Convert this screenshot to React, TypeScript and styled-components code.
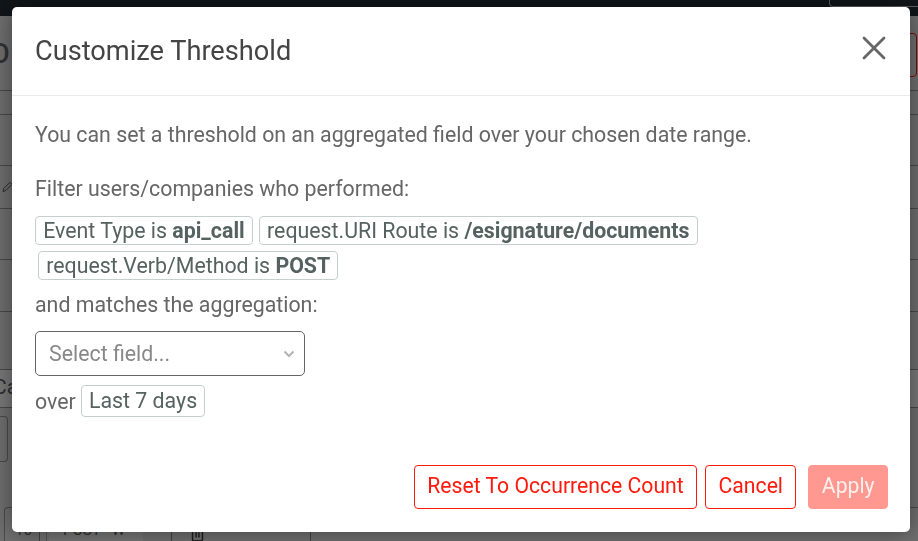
import styled, { createGlobalStyle } from "styled-components";
import { Trash2 } from "lucide-react";

const GlobalStyle = createGlobalStyle`
   html, body {
      margin: 0;
      height: 100%;
      overflow: hidden;
      background-color: #707070;
      font-family: Roboto, "Liberation Sans", sans-serif;
   }
`;

export default function App() {
   return (
      <>
         <GlobalStyle />
         <Page>
            <TopBar>
               <TopBarButton />
            </TopBar>
            <TitleRow>
               <PageTitle>O</PageTitle>
               <DangerOutline />
            </TitleRow>
            <PageRow $height={24} />
            <PageRow $height={51} />
            <PageRow $height={43}>
               <svg width="14" height="14" viewBox="0 0 14 14" fill="none" stroke="#2a2a2a" strokeWidth="1">
                  <path d="M3 11.5l.8-3L10 2.3l2 2L5.8 10.5z" />
               </svg>
            </PageRow>
            <PageRow $height={51} />
            <PageRow $height={52} />
            <PageRow $height={58} />
            <BandRow>Ca</BandRow>
            <CardRow>
               <GhostCard />
            </CardRow>
            <TableRow>
               <CountCell>16</CountCell>
               <VerbCell>
                  <VerbChip>POST · W</VerbChip>
               </VerbCell>
               <TrashCell>
                  <Trash2 size={17} strokeWidth={2} color="#1c1c1c" />
               </TrashCell>
            </TableRow>
         </Page>
         <Modal>
            <ModalHeader>
               <ModalTitle>Customize Threshold</ModalTitle>
               <CloseButton aria-label="Close">
                  <svg width="24" height="24" viewBox="0 0 24 24" fill="none" stroke="#666" strokeWidth="2.8" strokeLinecap="round">
                     <path d="M2 2l20 20M22 2L2 22" />
                  </svg>
               </CloseButton>
            </ModalHeader>
            <ModalBody>
               <Intro>You can set a threshold on an aggregated field over your chosen date range.</Intro>
               <Label>Filter users/companies who performed:</Label>
               <Chips>
                  <Chip>
                     Event Type is <b>api_call</b>
                  </Chip>
                  <Chip>
                     request.URI Route is <b>/esignature/documents</b>
                  </Chip>
                  <Chip>
                     request.Verb/Method is <b>POST</b>
                  </Chip>
               </Chips>
               <AggregationLabel>and matches the aggregation:</AggregationLabel>
               <SelectBox>
                  <Placeholder>Select field...</Placeholder>
                  <svg width="12" height="8" viewBox="0 0 12 8" fill="none" stroke="#b3b3b3" strokeWidth="2">
                     <path d="M1.5 1.5L6 6l4.5-4.5" />
                  </svg>
               </SelectBox>
               <OverRow>
                  over <DateChip>Last 7 days</DateChip>
               </OverRow>
            </ModalBody>
            <ModalFooter>
               <OutlineButton>Reset To Occurrence Count</OutlineButton>
               <OutlineButton>Cancel</OutlineButton>
               <ApplyButton>Apply</ApplyButton>
            </ModalFooter>
         </Modal>
      </>
   );
}

const Page = styled.div`
   height: 541px;
   overflow: hidden;
   background-color: #707070;
   color: #2e2e2e;
`;

const TopBar = styled.div`
   height: 16px;
   background-color: #11161a;
   display: flex;
   justify-content: flex-end;
`;

const TopBarButton = styled.div`
   width: 88px;
   height: 6px;
   border: 1px solid #5c6165;
   border-top: none;
   border-right: none;
   border-radius: 0 0 0 4px;
`;

const TitleRow = styled.div`
   height: 75px;
   box-sizing: border-box;
   border-bottom: 1px solid #4a4a4a;
   display: flex;
   justify-content: space-between;
   align-items: center;
   overflow: hidden;
`;

const PageTitle = styled.div`
   font-size: 27px;
   font-weight: 500;
   color: #333;
   margin-top: 2px;
   transform: translateX(-9px);
`;

const DangerOutline = styled.div`
   width: 60px;
   height: 44px;
   box-sizing: border-box;
   border: 1px solid #7e0c06;
   border-radius: 4px;
   margin-right: 1px;
   margin-top: 4px;
`;

const PageRow = styled.div<{ $height: number }>`
   height: ${({ $height }) => $height}px;
   box-sizing: border-box;
   border-bottom: 1px solid #4a4a4a;
   display: flex;
   align-items: center;
`;

const BandRow = styled.div`
   height: 38px;
   box-sizing: border-box;
   background-color: #7a7a7a;
   border-bottom: 1px solid #4a4a4a;
   font-size: 21px;
   color: #2e2e2e;
   line-height: 32px;
   padding-top: 1px;
   text-indent: -7px;
`;

const CardRow = styled.div`
   height: 99px;
   padding-top: 8px;
   box-sizing: border-box;
`;

const GhostCard = styled.div`
   width: 7px;
   height: 44px;
   border: 1px solid #4c4c4c;
   border-left: none;
   border-radius: 0 4px 4px 0;
`;

const TableRow = styled.div`
   display: flex;
   height: 34px;
   margin-left: 4px;
   border: 1px solid #4c4c4c;
   border-radius: 4px 0 0 0;
   border-width: 1px 0 0 1px;
   font-size: 15px;
   color: #2e2e2e;
   white-space: nowrap;
`;

const CountCell = styled.div`
   width: 35px;
   box-sizing: border-box;
   border-right: 1px solid #444;
   padding: 13px 0 0 10px;
   margin-right: 6px;
`;

const VerbCell = styled.div`
   width: 126px;
   box-sizing: border-box;
   border-left: 1px solid #555;
   border-right: 1px solid #444;
   padding: 0 28px 0 2px;
`;

const VerbChip = styled.div`
   height: 100%;
   box-sizing: border-box;
   background-color: #767676;
   padding: 13px 0 0 14px;
`;

const TrashCell = styled.div`
   width: 139px;
   box-sizing: border-box;
   border-right: 1px solid #444;
   padding: 17px 0 0 17px;
`;

const Modal = styled.div`
   position: fixed;
   left: 12px;
   top: 7px;
   width: 898px;
   height: 525px;
   display: flex;
   flex-direction: column;
   background-color: #fff;
   border-radius: 5px;
   box-shadow: 0 0 24px rgb(0 0 0 / 45%);
`;

const ModalHeader = styled.div`
   height: 89px;
   box-sizing: border-box;
   border-bottom: 1px solid #e9ecec;
   padding: 0 24px 0 23px;
   display: flex;
   justify-content: space-between;
   align-items: center;
`;

const ModalTitle = styled.div`
   font-size: 27.2px;
   color: #444;
`;

const CloseButton = styled.div`
   display: flex;
   margin-top: -7px;
`;

const ModalBody = styled.div`
   flex: 1;
   padding: 27px 23px 0;
   font-size: 21.33px;
   color: #666;
`;

const Intro = styled.div`
   line-height: 24px;
   margin-bottom: 30px;
`;

const Label = styled.div`
   line-height: 24px;
   margin-bottom: 15px;
`;

const Chips = styled.div`
   display: flex;
   flex-wrap: wrap;
   gap: 6px;
   width: 700px;
`;

const Chip = styled.span`
   height: 29px;
   box-sizing: border-box;
   border: 1px solid #c6cfcf;
   border-radius: 4px;
   padding: 0 7.2px;
   color: #55625f;
   line-height: 27px;
   white-space: nowrap;

   &:last-child {
      margin-left: 3px;
   }
`;

const AggregationLabel = styled.div`
   line-height: 24px;
   margin: 13px 0 14px;
`;

const SelectBox = styled.div`
   width: 270px;
   height: 45px;
   box-sizing: border-box;
   border: 1px solid #666;
   border-radius: 5px;
   padding: 0 9px 0 13px;
   display: flex;
   justify-content: space-between;
   align-items: center;
`;

const Placeholder = styled.span`
   color: #888;
`;

const OverRow = styled.div`
   display: flex;
   align-items: center;
   gap: 2px;
   margin-top: 9px;
`;

const DateChip = styled(Chip)`
   height: 32px;
   line-height: 30px;
   margin: 0;
`;

const ModalFooter = styled.div`
   display: flex;
   justify-content: flex-end;
   gap: 8px;
   padding: 0 22px 23px 0;
`;

const OutlineButton = styled.div`
   height: 44px;
   box-sizing: border-box;
   border: 1px solid #ff1a0d;
   border-radius: 4px;
   padding: 0 12.4px;
   color: #ff1a0d;
   background-color: #fff;
   font-size: 21.2px;
   line-height: 40px;
`;

const ApplyButton = styled(OutlineButton)`
   margin-left: 4px;
   border-color: #ff9890;
   background-color: #ff9890;
   color: #fff0ee;
`;
